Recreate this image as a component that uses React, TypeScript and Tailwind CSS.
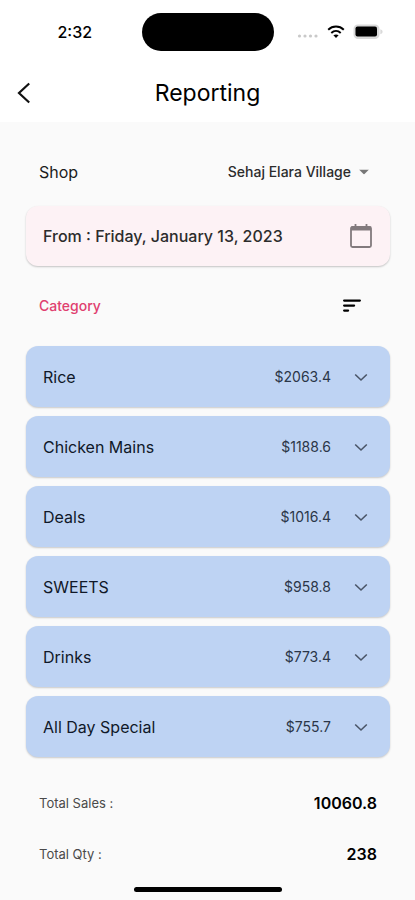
import { useState } from "react";

const shops = ["Sehaj Elara Village"];

const initialCategories = [
  { name: "Rice", total: 2063.4 },
  { name: "Chicken Mains", total: 1188.6 },
  { name: "Deals", total: 1016.4 },
  { name: "SWEETS", total: 958.8 },
  { name: "Drinks", total: 773.4 },
  { name: "All Day Special", total: 755.7 },
];

function StatusBar() {
  return (
    <div className="grid h-16 grid-cols-[1fr_132px_1fr] items-center">
      <span className="pl-2 text-center text-base leading-6 font-medium">2:32</span>
      <div className="h-[38px] rounded-full bg-black" />
      <div className="flex items-center justify-center gap-2 pr-2">
        <svg width="22" height="12" viewBox="0 0 22 12" fill="#c9c9c9" aria-hidden="true">
          <circle cx="2.5" cy="10" r="1.6" />
          <circle cx="8" cy="10" r="1.6" />
          <circle cx="13.5" cy="10" r="1.6" />
          <circle cx="19" cy="10" r="1.6" />
        </svg>
        <svg width="18" height="14" viewBox="0 0 18 14" fill="none" stroke="#000" strokeWidth="2" aria-hidden="true">
          <path d="M1.2 4.7C5.6.5 12.4.5 16.8 4.7" />
          <path d="M4.3 7.9C7 5.5 11 5.5 13.7 7.9" />
          <path d="M9 13 6.4 10.3C7.9 9.1 10.1 9.1 11.6 10.3Z" fill="#000" stroke="none" />
        </svg>
        <svg width="30" height="16" viewBox="0 0 30 16" aria-hidden="true">
          <rect x="0.5" y="0.5" width="26" height="14.5" rx="4.5" fill="#d9d9d9" />
          <rect x="2.5" y="2.5" width="21.5" height="10" rx="2" fill="#000" />
          <path d="M27.3 5.3c1.6.6 2.3 1.5 2.3 2.5s-.7 1.9-2.3 2.5Z" fill="#d9d9d9" />
        </svg>
      </div>
    </div>
  );
}

function CategoryCard({ name, total }: { name: string; total: number }) {
  const [open, setOpen] = useState(false);
  return (
    <li>
      <button
        type="button"
        aria-expanded={open}
        onClick={() => setOpen(!open)}
        className="flex h-[61px] w-full items-center rounded-xl bg-[#bed3f3] px-[17px] text-left shadow-[0_1px_2px_rgba(0,0,0,0.2)]"
      >
        <span className="flex-1 text-base text-[#101828]">{name}</span>
        <span className="text-sm text-[#2b3648]">${total}</span>
        <svg
          width="24"
          height="24"
          viewBox="0 0 24 24"
          fill="none"
          stroke="#4a5567"
          strokeWidth="1.6"
          className={open ? "ml-[18px] rotate-180" : "ml-[18px]"}
          aria-hidden="true"
        >
          <path d="m6.2 9.5 5.8 5.5 5.8-5.5" />
        </svg>
      </button>
    </li>
  );
}

export default function App() {
  const [categories, setCategories] = useState(initialCategories);

  return (
    <div className="flex min-h-screen flex-col bg-[#fafafa] font-[Inter,'Noto_Sans',sans-serif] text-black">
      <header className="bg-white">
        <StatusBar />
        <div className="grid h-[58px] grid-cols-[48px_1fr_48px] items-center">
          <button type="button" aria-label="Back" className="flex h-12 items-center justify-center">
            <svg width="24" height="24" viewBox="0 0 24 24" fill="none" stroke="#111" strokeWidth="2.2" aria-hidden="true">
              <path d="M17.2 2.5 7 12l10.2 9.5" />
            </svg>
          </button>
          <h1 className="text-center text-[23px] leading-7">Reporting</h1>
        </div>
      </header>

      <main className="flex flex-1 flex-col pt-[37px] pr-[25px] pl-[26px]">
        <div className="flex items-center justify-between px-[13px]">
          <label htmlFor="shop" className="text-base text-[#1c1c1c]">
            Shop
          </label>
          <div className="relative">
            <select
              id="shop"
              className="field-sizing-content h-6 appearance-none bg-transparent pr-[26px] text-sm font-medium text-[#2c2c2c]"
            >
              {shops.map((shop) => (
                <option key={shop}>{shop}</option>
              ))}
            </select>
            <svg
              width="10"
              height="5"
              viewBox="0 0 10 5"
              fill="#777"
              className="pointer-events-none absolute top-1/2 right-2 -translate-y-1/2"
              aria-hidden="true"
            >
              <path d="M0 0h10L5 5Z" />
            </svg>
          </div>
        </div>

        <button
          type="button"
          className="mt-[22px] flex h-[60px] w-full items-center justify-between rounded-xl bg-[#fdf2f5] px-[17px] text-left shadow-[0_1px_2px_rgba(0,0,0,0.22)]"
        >
          <span className="text-base font-medium text-[#2c2c2c]">From : Friday, January 13, 2023</span>
          <svg width="24" height="26" viewBox="0 0 24 26" fill="none" stroke="#827a7d" strokeWidth="1.8" aria-hidden="true">
            <rect x="2" y="4" width="20" height="20" rx="1.5" />
            <path d="M2 5.5h20" strokeWidth="4" />
            <path d="M6.5 1v4M17.5 1v4" />
          </svg>
        </button>

        <div className="mt-7 flex h-6 items-center justify-between pr-[29px] pl-[13px]">
          <h2 className="text-sm font-medium text-[#e0406f]">Category</h2>
          <button
            type="button"
            aria-label="Sort categories"
            onClick={() => setCategories([...categories].reverse())}
          >
            <svg width="18" height="14" viewBox="0 0 18 14" fill="none" stroke="#000" strokeWidth="2.2" strokeLinecap="round" aria-hidden="true">
              <path d="M1.1 1.6h15.8M1.1 6.6h10M1.1 11.6h4" />
            </svg>
          </button>
        </div>

        <ul className="mt-7 flex flex-col gap-[9px]">
          {categories.map((category) => (
            <CategoryCard key={category.name} {...category} />
          ))}
        </ul>

        <dl className="mt-[34px] flex flex-col gap-[27px] pr-[13px] pl-[13px]">
          <div className="flex items-center justify-between">
            <dt className="text-[13px] leading-6 text-[#4a4a4a]">Total Sales :</dt>
            <dd className="text-base leading-6 font-semibold">10060.8</dd>
          </div>
          <div className="flex items-center justify-between">
            <dt className="text-[13px] leading-6 text-[#4a4a4a]">Total Qty :</dt>
            <dd className="text-base leading-6 font-semibold">238</dd>
          </div>
        </dl>

        <div className="mx-auto mt-auto mb-2 h-[5px] w-[148px] rounded-full bg-black" />
      </main>
    </div>
  );
}
